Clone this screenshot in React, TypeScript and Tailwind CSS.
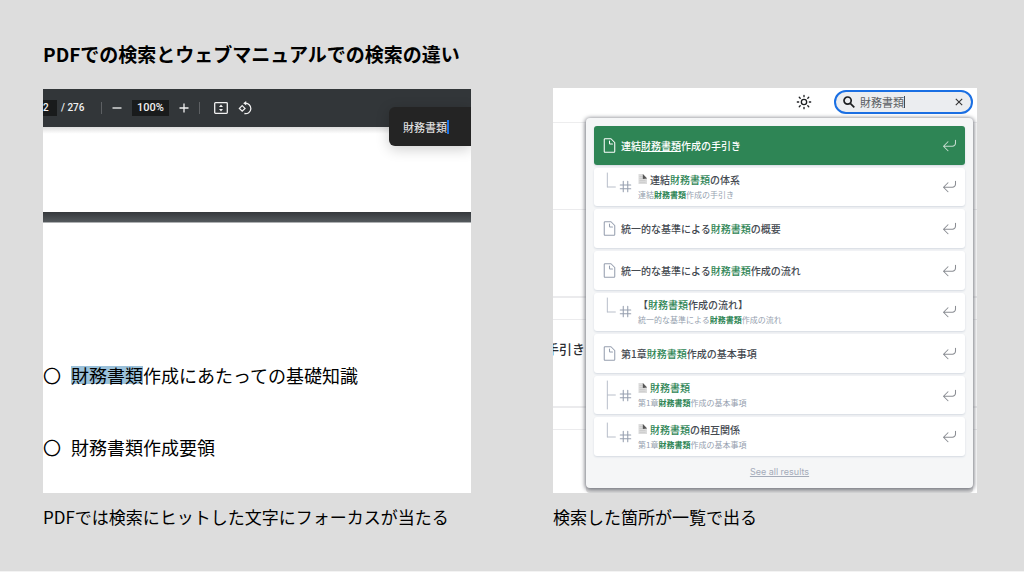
import { useState } from 'react';
import type { ReactNode } from 'react';

type Branch = 'last' | 'middle';

interface Hit {
  title: string;
  path?: string;
  branch?: Branch;
  page?: boolean;
}

const KEYWORD = '財務書類';

const hits: Hit[] = [
  { title: '連結財務書類作成の手引き' },
  { title: '連結財務書類の体系', path: '連結財務書類作成の手引き', branch: 'last', page: true },
  { title: '統一的な基準による財務書類の概要' },
  { title: '統一的な基準による財務書類作成の流れ' },
  { title: '【財務書類作成の流れ】', path: '統一的な基準による財務書類作成の流れ', branch: 'last' },
  { title: '第1章財務書類作成の基本事項' },
  { title: '財務書類', path: '第1章財務書類作成の基本事項', branch: 'middle', page: true },
  { title: '財務書類の相互関係', path: '第1章財務書類作成の基本事項', branch: 'last', page: true },
];

function Highlight({ text, className }: { text: string; className: string }) {
  const [before, after] = text.split(KEYWORD);
  return (
    <>
      {before}
      <mark className={`bg-transparent ${className}`}>{KEYWORD}</mark>
      {after}
    </>
  );
}

function Stroke({ d, className, box = '0 0 20 20' }: { d: string; className: string; box?: string }) {
  return (
    <svg viewBox={box} className={`shrink-0 ${className}`} fill="none" stroke="currentColor" strokeWidth="1.4" strokeLinecap="round" strokeLinejoin="round" aria-hidden="true">
      <path d={d} />
    </svg>
  );
}

function PageEmoji() {
  return (
    <svg viewBox="0 0 9 10" className="h-[10px] w-[9px] shrink-0" aria-hidden="true">
      <path d="M.5 0h4.6L9 4v6H.5z" fill="#dcdcdc" />
      <path d="M1.5 2.5h3M1.5 4.5h3M1.5 6.5h6M1.5 8.3h6" stroke="#c2c2c2" strokeWidth=".6" />
      <path d="M4.8 0 9 4.6 4.8 5z" fill="#555" />
    </svg>
  );
}

function HitRow({ hit, active }: { hit: Hit; active: boolean }) {
  const muted = active ? 'text-white' : 'text-[#969faf]';
  return (
    <li className="flex flex-1">
      <a
        href="#"
        className={`flex flex-1 items-center rounded-[3px] px-2 shadow-[0_1px_2px_#d4d9e1] ${active ? 'bg-[#2e8555] text-white' : 'bg-white text-[#444950]'}`}
      >
        {hit.branch ? (
          <>
            <Stroke
              box="0 0 24 54"
              className="h-[38px] w-4 text-[#b4bac6]"
              d={hit.branch === 'last' ? 'M8 6v21M20 27H8.3' : 'M8 6v42M20 27H8.3'}
            />
            <Stroke
              className="mr-[5px] size-[15px] text-[#969faf]"
              d="M13 13h4-4V8H7v5h6v4-4H7V8H3h4V3v5h6V3v5h4-4v5zm-6 0v4-4H3h4z"
            />
          </>
        ) : (
          <Stroke
            className={`mr-1 size-[15px] ${muted}`}
            d="M17 6v12c0 .52-.2 1-1 1H4c-.7 0-1-.33-1-1V2c0-.55.42-1 1-1h8l5 5zM14 8h-3.13c-.51 0-.87-.34-.87-.87V4"
          />
        )}
        <span className="flex flex-1 flex-col">
          <span className="flex items-center gap-[3px] text-[10px] leading-[15px] font-medium">
            {hit.page && <PageEmoji />}
            <span>
              <Highlight text={hit.title} className={active ? 'text-white underline' : 'text-[#2e8555]'} />
            </span>
          </span>
          {hit.path && (
            <span className="text-[8px] leading-[15px] text-[#969faf]">
              <Highlight text={hit.path} className="font-bold text-[#2e8555]" />
            </span>
          )}
        </span>
        <span className={active ? 'text-[#c5dccf]' : 'text-[#8a8d93]'}>
          <Stroke className="size-[15px]" d="M18 3v4c0 2-2 4-4 4H2M8 17l-6-6 6-6" />
        </span>
      </a>
    </li>
  );
}

function ToolButton({ label, className = '', children }: { label: string; className?: string; children: ReactNode }) {
  return (
    <button type="button" aria-label={label} className={`shrink-0 ${className}`}>
      {children}
    </button>
  );
}

function PdfViewer() {
  return (
    <div className="relative mt-px flex h-[404px] flex-col overflow-hidden bg-white">
      <div className="flex h-[38px] items-center bg-[#323639] font-[Roboto,sans-serif] text-[10px] leading-4 font-medium text-[#f1f1f1]">
        <input aria-label="ページ" defaultValue="2" className="h-4 w-[14px] bg-[#191b1c]" />
        <span className="ml-1 w-10">/ 276</span>
        <span className="h-3 w-px bg-[#5d6063]" />
        <ToolButton label="縮小" className="ml-[9px]">
          <svg viewBox="0 0 12 12" className="size-3" stroke="currentColor" strokeWidth="1.3"><path d="M1.5 6h9" /></svg>
        </ToolButton>
        <input aria-label="倍率" defaultValue="100%" className="ml-[9px] h-4 w-[37px] bg-[#191b1c] text-center text-[11px]" />
        <ToolButton label="拡大" className="ml-[9px]">
          <svg viewBox="0 0 12 12" className="size-3" stroke="currentColor" strokeWidth="1.3"><path d="M1.5 6h9M6 1.5v9" /></svg>
        </ToolButton>
        <span className="ml-[9px] h-3 w-px bg-[#5d6063]" />
        <ToolButton label="ページに合わせる" className="ml-[14px]">
          <svg viewBox="0 0 14 12" className="h-3 w-[14px]" fill="none" stroke="currentColor" strokeWidth="1.3">
            <rect x=".7" y=".7" width="12.6" height="10.6" rx=".8" />
            <path d="M7 2.6 9 5H5zM7 9.4 9 7H5z" fill="currentColor" stroke="none" />
          </svg>
        </ToolButton>
        <ToolButton label="回転" className="ml-[10px]">
          <svg viewBox="0 0 14 14" className="size-[14px]" fill="none" stroke="currentColor" strokeWidth="1.3">
            <path d="M4.2 4.6 7 7.4 4.2 10.2 1.4 7.4z" />
            <path d="M7 2.3a5.2 5.2 0 1 1-.6 10.2" />
            <path d="M8.2 0v4.6L5.2 2.3z" fill="currentColor" stroke="none" />
          </svg>
        </ToolButton>
      </div>

      <div className="h-[85px] bg-linear-to-b from-[#dedede] via-white via-8% to-white" />
      <div className="h-[11px] border-b border-[#aeb0b2] bg-linear-to-b from-[#35383b] to-[#54595d]" />
      <ul className="flex flex-col gap-[54px] pt-[143px] text-[18px] leading-[18px] text-black">
        <li className="flex gap-[10px]">
          <span>〇</span>
          <span>
            <mark className="inline-block bg-[#9bc1da] text-black">{KEYWORD}</mark>作成にあたっての基礎知識
          </span>
        </li>
        <li className="flex gap-[10px]">
          <span>〇</span>
          <span>財務書類作成要領</span>
        </li>
      </ul>

      <div className="absolute top-[18px] right-0 flex h-[39px] w-[82px] items-center rounded-l-[6px] bg-[#242424] pl-[14px] shadow-[0_3px_14px_rgba(0,0,0,0.2)]">
        <input aria-label="検索" defaultValue={KEYWORD} className="w-11 shrink-0 text-[11px] leading-4 font-medium text-[#dcdcdc]" />
        <span className="h-[14px] w-[2px] shrink-0 bg-[#1a73e8]" />
      </div>
    </div>
  );
}

function WebManual() {
  const [query, setQuery] = useState(KEYWORD);

  return (
    <div className="relative h-[405px] overflow-hidden bg-white">
      <header className="flex h-[35px] items-start justify-end border-b border-[#ededee] pt-[2px] pr-1">
        <button type="button" aria-label="テーマ切り替え" className="mt-1 mr-[22px] text-[#1c1e21]">
          <svg viewBox="0 0 24 24" className="size-4" fill="none" stroke="currentColor" strokeWidth="2" strokeLinecap="round">
            <circle cx="12" cy="12" r="4" />
            <path d="M12 2v2M12 20V22M2 12h2M20 12H22M4.9 4.9l1.4 1.4M17.7 17.7l1.4 1.4M4.9 19.1l1.4-1.4M17.7 6.3l1.4-1.4" />
          </svg>
        </button>
        <label className="flex h-6 w-[139px] items-center rounded-full border-2 border-[#1a6fe3] bg-[#ebedf0] px-[7px]">
          <svg viewBox="0 0 12 12" className="mr-[5px] size-3 shrink-0 text-[#1c1e21]" fill="none" stroke="currentColor" strokeWidth="1.7">
            <circle cx="4.6" cy="4.6" r="3.6" />
            <path d="m7.3 7.3 4 4" />
          </svg>
          <input
            aria-label="サイト内検索"
            value={query}
            onChange={(e) => setQuery(e.target.value)}
            className="w-11 text-[11px] leading-4 text-[#5c5f64] outline-none"
          />
          <span className="h-3 w-px bg-[#444950]" />
          <button type="button" aria-label="クリア" onClick={() => setQuery('')} className="ml-auto text-[#333]">
            <svg viewBox="0 0 10 10" className="size-[10px]" stroke="currentColor" strokeWidth="1.1">
              <path d="m1.8 1.8 6.4 6.4M8.2 1.8 1.8 8.2" />
            </svg>
          </button>
        </label>
      </header>

      <div className="flex flex-col gap-[21px] pt-[86px]">
        <div className="h-[89px] border-t border-b-2 border-[#ebebed]" />
        <div className="flex h-[89px] items-center border-t border-b-2 border-[#ebebed] pb-7">
          <div className="flex w-8 justify-end overflow-hidden text-[13px] font-medium whitespace-nowrap text-[#2b2e33]">手引き</div>
        </div>
        <div className="h-16 border-t border-[#ebebed]" />
      </div>

      <div className="absolute top-[30px] right-1 left-[33px] flex h-[370px] flex-col rounded-[4px] bg-[#f5f6f7] px-2 pt-2 shadow-[0_1px_4px_1px_#73757d,0_5px_0_#dddddd]">
        <ul className="flex h-[330px] flex-col gap-[3px]">
          {hits.map((hit, i) => (
            <HitRow key={i} hit={hit} active={i === 0} />
          ))}
        </ul>
        <a href="#" className="mt-2 self-center font-[Inter,sans-serif] text-[9px] leading-4 text-[#a4abb9] underline">
          See all results
        </a>
      </div>
    </div>
  );
}

export default function App() {
  return (
    <main className="min-h-screen border-b border-[#f3f3f3] bg-[#dddddd] pt-10 pr-[47px] pl-[43px] font-['Noto_Sans_CJK_JP',sans-serif] text-black">
      <h1 className="text-[19px] leading-7 font-bold">PDFでの検索とウェブマニュアルでの検索の違い</h1>
      <div className="mt-5 grid grid-cols-[428fr_424fr] gap-[82px]">
        <figure className="min-w-0">
          <PdfViewer />
          <figcaption className="mt-3 text-[17px] leading-6 whitespace-nowrap">
            PDFでは検索にヒットした文字にフォーカスが当たる
          </figcaption>
        </figure>
        <figure className="min-w-0">
          <WebManual />
          <figcaption className="mt-3 text-[17px] leading-6">検索した箇所が一覧で出る</figcaption>
        </figure>
      </div>
    </main>
  );
}
